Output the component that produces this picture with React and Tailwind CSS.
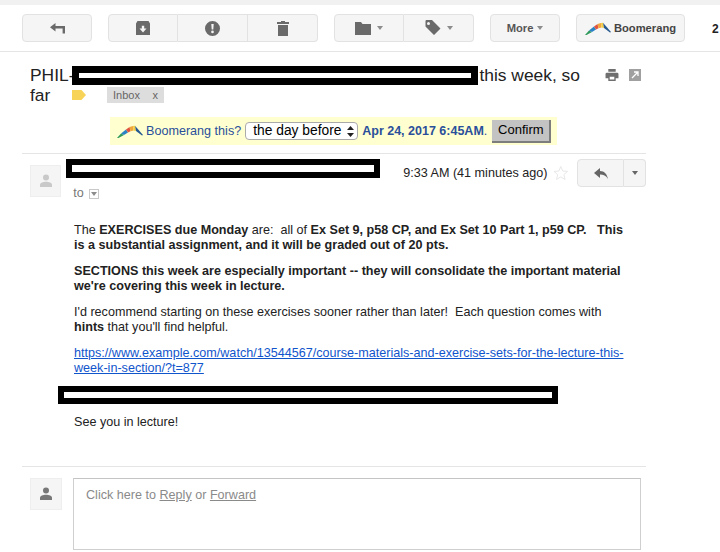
function Caret({ className = "" }) {
  return <span className={`inline-block w-0 h-0 border-x-[3.5px] border-x-transparent border-t-[4px] border-t-[#8c8c8c] ${className}`}></span>;
}

function ToolButton({ children, className = "" }) {
  return (
    <div className={`h-7 w-[70px] flex items-center justify-center gap-1.5 bg-[#f5f5f5] border border-[#e2e2e2] ${className}`}>
      {children}
    </div>
  );
}

// filled wedges, thin at both ends and thick at the peak
function BoomerangLogo({ w = 26, h = 13 }) {
  return (
    <svg width={w} height={h} viewBox="0 0 26 13">
      <path d="M0 13 L4 8.5 L7 10 L1.5 13 Z" fill="#2f9a5b" />
      <path d="M4 8.5 L9 4.5 L11 7.6 L7 10 Z" fill="#2b82c4" />
      <path d="M9 4.5 L12.5 2 L13.5 6.2 L11 7.6 Z" fill="#e0533f" />
      <path d="M12.5 2 L16 1 L16.5 5.6 L13.5 6.2 Z" fill="#f0a63a" />
      <path d="M16 1 L18 0.8 L19 6 L16.5 5.6 Z" fill="#f3cc45" />
      <path d="M18 0.8 L26 10 L25 10.5 L19 6 Z" fill="#25598f" />
    </svg>
  );
}

function Person({ color }) {
  return (
    <svg width="14" height="14" viewBox="0 0 14 14" fill={color}>
      <circle cx="7" cy="3.6" r="3" />
      <path d="M1 13 V10.8 C1 8.8 4 7.8 7 7.8 C10 7.8 13 8.8 13 10.8 V13 Z" />
    </svg>
  );
}

function Toolbar() {
  return (
    <div className="h-[47px] pl-[22px] pt-[9px] flex items-start border-b border-[#e5e5e5]">
      <ToolButton className="rounded-sm">
        <svg width="15" height="11" viewBox="0 0 15 11" fill="#6a6a6a">
          <path d="M5.5 0 V3 H15 V10.5 H12.6 V5.5 H5.5 V8.5 L0 4.2 Z" />
        </svg>
      </ToolButton>
      <div className="flex ml-4">
        <ToolButton className="rounded-l-sm">
          <svg width="14" height="14" viewBox="0 0 14 14" fill="#6a6a6a">
            <path fillRule="evenodd" d="M1.5 0 H12.5 L14 2.6 V14 H0 V2.6 Z M7 11.5 L10.5 7.6 H8.2 V4.8 H5.8 V7.6 H3.5 Z" />
          </svg>
        </ToolButton>
        <ToolButton className="border-l-0">
          <svg width="15" height="15" viewBox="0 0 15 15" fill="#6a6a6a">
            <path fillRule="evenodd" d="M7.5 0 A7.5 7.5 0 1 0 7.5 15 A7.5 7.5 0 1 0 7.5 0 Z M6.3 3 H8.7 L8.3 8.6 H6.7 Z M7.5 9.6 A1.35 1.35 0 1 0 7.5 12.3 A1.35 1.35 0 1 0 7.5 9.6 Z" />
          </svg>
        </ToolButton>
        <ToolButton className="border-l-0 rounded-r-sm">
          <svg width="12" height="15" viewBox="0 0 12 15" fill="#6a6a6a">
            <path d="M4 0 H8 V1 H12 V3 H0 V1 H4 Z M1 4 H11 V15 H1 Z" />
          </svg>
        </ToolButton>
      </div>
      <div className="flex ml-4">
        <ToolButton className="rounded-l-sm">
          <svg width="16" height="13" viewBox="0 0 16 13" fill="#6a6a6a">
            <path d="M0 0 H6 L7.5 2 H16 V13 H0 Z" />
          </svg>
          <Caret />
        </ToolButton>
        <ToolButton className="border-l-0 rounded-r-sm">
          <svg width="16" height="16" viewBox="0 0 16 16" fill="#6a6a6a">
            <path fillRule="evenodd" d="M1 0 H7 L15.5 8.5 L9 15 L0.5 6.5 V1 Z M3.5 2 A1.5 1.5 0 1 0 3.5 5 A1.5 1.5 0 1 0 3.5 2 Z" />
          </svg>
          <Caret />
        </ToolButton>
      </div>
      <ToolButton className="ml-4 rounded-sm text-[11.2px] font-bold text-[#555]">
        More
        <Caret className="-ml-0.5" />
      </ToolButton>
      <div className="ml-4 h-7 w-[109px] flex items-center justify-center gap-[3px] bg-[#f5f5f5] border border-[#e2e2e2] rounded-sm text-[11.2px] font-bold text-[#444]">
        <BoomerangLogo />
        Boomerang
      </div>
      <span className="ml-[27px] mt-1.5 text-[12px] font-bold text-[#222]">2</span>
    </div>
  );
}

function Subject() {
  return (
    <div className="pl-[30px] pt-[12px] flex items-start">
      <div className="w-[560px] text-[17.4px] leading-[22px] text-[#222]">
        <div className="flex items-start">
          <span>PHIL-</span>
          <span className="ml-[-2px] mt-[2px] w-[406px] h-[19px] border-[7px] border-black bg-white"></span>
          <span className="ml-[1px]">this week, so</span>
        </div>
        <div className="flex items-center mt-[-2px]">
          <span className="w-[42px]">far</span>
          <svg width="14" height="10" viewBox="0 0 14 10" fill="#f7d358">
            <path d="M0 0 H9.5 L14 5 L9.5 10 H0 Z" />
          </svg>
          <span className="ml-[21px] h-4 w-[57px] bg-[#dddddd] text-[#666] text-[11px] leading-4 pl-1.5 flex justify-between pr-1.5">
            <span>Inbox</span>
            <span>x</span>
          </span>
        </div>
      </div>
      <div className="ml-[15px] mt-[5px] flex items-center gap-[10px]">
        <svg width="14" height="12" viewBox="0 0 14 13" fill="#6f6f6f">
          <path fillRule="evenodd" d="M3 0 H11 V3 H3 Z M1.5 4 H12.5 A1.5 1.5 0 0 1 14 5.5 V10 H11 V13 H3 V10 H0 V5.5 A1.5 1.5 0 0 1 1.5 4 Z M4.5 8.5 V11.5 H9.5 V8.5 Z" />
        </svg>
        <svg width="12" height="12" viewBox="0 0 12 12">
          <rect width="12" height="12" fill="#a0a0a0" />
          <path d="M3 9 L8.5 3.5 M5 3 H9 V7" stroke="#fff" strokeWidth="1.3" fill="none" />
        </svg>
      </div>
    </div>
  );
}

function BoomerangBar() {
  return (
    <div className="ml-[110px] mt-[11px] w-[447px] h-[28px] bg-[#ffffd0] flex items-center pl-[7px] text-[12.6px] text-[#2a4f9a]">
      <BoomerangLogo w={26} h={13} />
      <span className="ml-[3px]">Boomerang this?</span>
      <span className="ml-1 w-[113px] h-[18px] border border-[#aaa] rounded-[4px] bg-white text-black flex items-center justify-between pl-[7px] pr-[3px] text-[13.8px]">
        the day before
        <svg width="7" height="11" viewBox="0 0 7 11" fill="#222">
          <path d="M3.5 0 L7 4 H0 Z M0 7 H7 L3.5 11 Z" />
        </svg>
      </span>
      <span className="ml-[4px] font-bold text-[12.5px]">Apr 24, 2017 6:45AM</span>
      <span>.</span>
      <span className="ml-[5px] w-[59px] h-[23px] bg-[#c3c3c3] border-r-2 border-b-2 border-[#7d7d7d] text-black text-[13px] flex items-center justify-center">Confirm</span>
    </div>
  );
}

function Message() {
  return (
    <div className="ml-[22px] mt-[8px] w-[624px] border-t border-[#e5e5e5] text-[12.6px] leading-[15px] text-[#222]">
      <div className="flex items-start pt-[5px]">
        <div className="ml-2 mt-[6px] w-8 h-8 bg-[#f5f5f5] border border-[#eeeeee] flex items-center justify-center">
          <Person color="#c9c9c9" />
        </div>
        <div className="ml-[5px]">
          <div className="w-[314px] h-[19px] border-[6px] border-black bg-white"></div>
          <div className="ml-[7px] mt-[8px] flex items-center gap-[5px] text-[#777]">
            to
            <span className="w-[10px] h-[10px] border border-[#c9c9c9] flex items-center justify-center">
              <Caret className="border-x-[3px] border-t-[3px]" />
            </span>
          </div>
        </div>
        <span className="ml-[23px] mt-[7px] text-[#222] whitespace-nowrap">9:33 AM (41 minutes ago)</span>
        <svg className="ml-[6px] mt-[6px]" width="16" height="16" viewBox="0 0 24 24" fill="none" stroke="#e6e6e6" strokeWidth="1.5">
          <path d="M12 2 L15 9 L22.5 9.5 L16.8 14.5 L18.6 22 L12 18 L5.4 22 L7.2 14.5 L1.5 9.5 L9 9 Z" />
        </svg>
        <div className="ml-[8px] flex">
          <div className="w-[47px] h-7 bg-[#f5f5f5] border border-[#e2e2e2] rounded-l-sm flex items-center justify-center">
            <svg width="14" height="11" viewBox="0 0 14 11" fill="#666">
              <path d="M6 0 V3 C10.5 3 13 6 14 11 C12 7.8 9.5 6.6 6 6.6 V10 L0 5 Z" />
            </svg>
          </div>
          <div className="w-[22px] h-7 bg-[#f5f5f5] border border-l-0 border-[#e2e2e2] rounded-r-sm flex items-center justify-center">
            <Caret className="border-t-[#666]" />
          </div>
        </div>
      </div>

      <div className="ml-[52px] mt-[22px] w-[552px]">
        <p>
          The <b>EXERCISES due Monday</b> are:&nbsp; all of <b>Ex Set 9, p58 CP, and Ex Set 10 Part 1, p59 CP.&nbsp;&nbsp; This is a substantial assignment, and it will be graded out of 20 pts.</b>
        </p>
        <p className="mt-[11px] font-bold">
          SECTIONS this week are especially important -- they will consolidate the important material we're covering this week in lecture.
        </p>
        <p className="mt-[11px]">
          I'd recommend starting on these exercises sooner rather than later!&nbsp; Each question comes with <b>hints</b> that you'll find helpful.
        </p>
        <p className="mt-[11px]">
          <a className="text-[#1155cc] underline whitespace-nowrap">
            https://www.example.com/watch/13544567/course-materials-and-exercise-sets-for-the-lecture-this-<br />
            week-in-section/?t=877
          </a>
        </p>
        <div className="ml-[-16px] mt-[10px] w-[500px] h-[18px] border-[6px] border-black bg-white"></div>
        <p className="mt-[11px]">See you in lecture!</p>
      </div>
    </div>
  );
}

function ReplyBox() {
  return (
    <div className="ml-[22px] mt-[36px] w-[624px] border-t border-[#e5e5e5] pt-[11px] flex items-start">
      <div className="ml-2 w-8 h-8 bg-[#f5f5f5] border border-[#eeeeee] flex items-center justify-center">
        <Person color="#777" />
      </div>
      <div className="ml-[11px] w-[568px] h-[72px] border border-[#cfcfcf] border-t-[#c4c4c4] pl-3 pt-[9px] text-[12.6px] leading-[15px] text-[#8a8a8a]">
        Click here to <span className="underline">Reply</span> or <span className="underline">Forward</span>
      </div>
    </div>
  );
}

export default function App() {
  return (
    <div className="w-[720px] h-[552px] overflow-hidden bg-white font-['Liberation_Sans',Arial,sans-serif]">
      <div className="h-[5px] bg-[#f1f1f1]"></div>
      <Toolbar />
      <Subject />
      <BoomerangBar />
      <Message />
      <ReplyBox />
    </div>
  );
}
